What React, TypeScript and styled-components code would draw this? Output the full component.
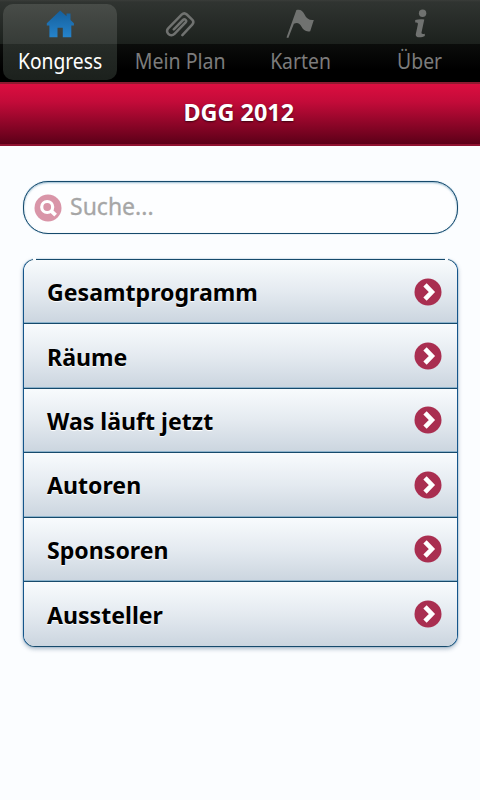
import type { ReactNode } from "react";
import styled, { createGlobalStyle } from "styled-components";

const tabs = [
  { id: "kongress", title: "Kongress", icon: <HomeIcon />, squeeze: 0.875 },
  { id: "plan", title: "Mein Plan", icon: <ClipIcon />, squeeze: 0.89 },
  { id: "karten", title: "Karten", icon: <FlagIcon />, squeeze: 0.88 },
  { id: "ueber", title: "Über", icon: <InfoIcon />, squeeze: 0.88 },
];

const entries = [
  "Gesamtprogramm",
  "Räume",
  "Was läuft jetzt",
  "Autoren",
  "Sponsoren",
  "Aussteller",
];

function HomeIcon() {
  return (
    <svg width="30" height="30" viewBox="0 0 30 30">
      <defs>
        <linearGradient id="home" x1="0" y1="0" x2="0" y2="1">
          <stop offset="0" stopColor="#155f9c" />
          <stop offset="1" stopColor="#2583cb" />
        </linearGradient>
      </defs>
      <path
        fill="url(#home)"
        d="M15.2 1.6 21.5 7.2V4.5h4V11l3.4 3.2v2.2h-2.6v11.8h-8.5V18.8h-5.3v9.4H4.4V16.4H1.8v-2.2z"
      />
    </svg>
  );
}

function ClipIcon() {
  return (
    <svg width="30" height="30" viewBox="0 0 30 30">
      <path
        fill="none"
        stroke="#707270"
        strokeWidth="2.5"
        strokeLinecap="round"
        strokeLinejoin="round"
        d="M17.4 26.2 27.2 15.6c1.6-1.8 1.4-3.4.2-4.7l-5.6-5.4c-1.7-1.6-3.6-1.4-5.2.2L3.4 19.2c-1.8 1.9-1.7 3.7-.2 5.5 1.8 2.1 4.3 2.2 6.3.2L20.6 13.3c1.6-1.8-.8-4.1-2.6-2.3L8.8 20.4"
      />
    </svg>
  );
}

function FlagIcon() {
  return (
    <svg width="30" height="30" viewBox="0 0 30 30">
      <path
        fill="#707270"
        d="M11.4.9c4.1-.9 6.2.6 8.2 4.7 1.8 4.1 4.7 5.9 9.2 5.4l-3.6 11.3c-4.5.8-7-1.2-8.8-4.7-1.7-3.5-4.1-4.5-7.5-2.9L3.3 28.9l-1.8-.5z"
      />
    </svg>
  );
}

function InfoIcon() {
  return (
    <svg width="30" height="30" viewBox="0 0 30 30">
      <circle cx="17.6" cy="4.2" r="3.7" fill="#707270" />
      <path
        fill="#707270"
        d="M10.2 11c3.1-1 6-1.1 9.1-.5l-2.8 13c-.2 1.5.9 1.7 3.3 1.2v2.4c-3 1.6-9.7 2.4-9-2.1l2-9.2c.4-2-.4-2.6-2.6-2.2z"
      />
    </svg>
  );
}

function ArrowIcon() {
  return (
    <svg width="28" height="28" viewBox="0 0 28 28">
      <circle cx="14" cy="14" r="13.5" fill="#a92e50" />
      <path
        fill="none"
        stroke="#fff"
        strokeWidth="4.6"
        d="m11 6.8 6.9 7.2-6.9 7.2"
      />
    </svg>
  );
}

function SearchIcon() {
  return (
    <svg width="28" height="28" viewBox="0 0 28 28">
      <circle cx="14" cy="14" r="13.5" fill="#d995a8" />
      <circle
        cx="13.2"
        cy="13"
        r="5.5"
        fill="none"
        stroke="#fff"
        strokeWidth="3.2"
      />
      <path stroke="#fff" strokeWidth="3.8" d="m16.6 16.4 5 4.8" />
    </svg>
  );
}

type TabProps = {
  active: boolean;
  icon: ReactNode;
  squeeze: number;
  title: string;
};

function Tab({ active, icon, squeeze, title }: TabProps) {
  return (
    <TabButton $active={active}>
      {icon}
      <TabLabel $squeeze={squeeze}>{title}</TabLabel>
    </TabButton>
  );
}

function App() {
  return (
    <>
      <GlobalStyle />
      <Screen>
        <TabBar>
          {tabs.map(({ id, ...tab }) => (
            <Tab key={id} active={id === "kongress"} {...tab} />
          ))}
        </TabBar>
        <Header>
          <Title>DGG 2012</Title>
        </Header>
        <Content>
          <SearchBox>
            <SearchIcon />
            <SearchHint>Suche...</SearchHint>
          </SearchBox>
          <List>
            {entries.map((entry) => (
              <ListItem key={entry}>
                <ListLabel>{entry}</ListLabel>
                <ArrowIcon />
              </ListItem>
            ))}
          </List>
        </Content>
      </Screen>
    </>
  );
}

const GlobalStyle = createGlobalStyle`
  * {
    box-sizing: border-box;
    margin: 0;
    padding: 0;
  }

  body {
    background-color: #fbfdff;
    font-family: "Noto Sans", "Open Sans", sans-serif;
  }

  svg {
    display: block;
    flex: none;
  }
`;

const Screen = styled.div`
  display: flex;
  flex-direction: column;
  height: 800px;
  overflow: hidden;
  width: 480px;
`;

const TabBar = styled.nav`
  background: linear-gradient(
    #3a3d3a 0,
    #303431 2px,
    #1c211d 44px,
    #0b0d0b 44px,
    #000 70px
  );
  display: grid;
  grid-template-columns: repeat(4, 120px);
  height: 82px;
  padding-top: 4px;
`;

const TabButton = styled.button<{ $active: boolean }>`
  align-items: center;
  background: ${(props) =>
    props.$active
      ? "linear-gradient(#484c48 0, #363b37 40px, #262b27 40px, #1c211d 100%)"
      : "none"};
  border: none;
  border-radius: 10px;
  color: ${(props) => (props.$active ? "#fff" : "#7c7c7c")};
  display: flex;
  flex-direction: column;
  font-family: inherit;
  height: 76px;
  margin: 0 3px;
  padding-top: 5px;
`;

const TabLabel = styled.span<{ $squeeze: number }>`
  font-size: 22px;
  line-height: 30px;
  margin-top: 6px;
  transform: scaleX(${(props) => props.$squeeze});
  white-space: nowrap;
`;

const Header = styled.header`
  align-items: center;
  background: linear-gradient(#dc0e40, #c30b39 30%, #5c0018);
  border-bottom: 2px solid #8f1230;
  border-top: 2px solid #8c1a30;
  display: flex;
  height: 64px;
  justify-content: center;
`;

const Title = styled.h1`
  color: #fff;
  font-size: 24px;
  font-weight: 700;
  line-height: 30px;
  padding: 0 2px 4px 0;
  text-shadow: 0 1px 2px rgba(0, 0, 0, 0.6);
  transform: scaleX(0.975);
`;

const Content = styled.main`
  padding: 35px 22px 0 23px;
`;

const SearchBox = styled.div`
  align-items: center;
  background-color: #fdfeff;
  border: 1px solid #164a6c;
  border-radius: 25px;
  box-shadow: inset 0 1px 2px rgba(50, 120, 160, 0.5),
    0 0 1px rgba(30, 110, 160, 0.7);
  display: flex;
  gap: 8px;
  height: 53px;
  padding-left: 10px;
`;

const SearchHint = styled.span`
  color: #a6a6a6;
  font-size: 23px;
  -webkit-text-stroke: 0.3px #a6a6a6;
  line-height: 30px;
  padding-bottom: 3px;
`;

const List = styled.ul`
  border: 1px solid #164a6c;
  border-left-color: #15558a;
  border-radius: 12px;
  border-right-color: #15558a;
  box-shadow: 0 0 1px #1871a8, 0 2px 4px rgba(60, 90, 120, 0.4);
  list-style: none;
  margin-top: 25px;
  position: relative;

  /* small breaks in the outline next to the upper corners */
  &::before,
  &::after {
    background-color: #fbfdff;
    content: "";
    height: 2px;
    position: absolute;
    top: -2px;
    width: 3px;
  }

  &::before {
    left: 9px;
  }

  &::after {
    right: 9px;
  }
`;

const ListItem = styled.li`
  align-items: center;
  background: linear-gradient(#f8fbfd, #e4eaf0 50%, #cbd5df);
  display: flex;
  height: 64.4px;
  justify-content: space-between;
  padding: 0 15.5px 0 23px;

  &:not(:last-child) {
    border-bottom: 1px solid #164a6c;
    box-shadow: inset 0 -1px 0 #8cb3cc;
  }

  &:first-child {
    border-radius: 11px 11px 0 0;
  }

  &:last-child {
    border-radius: 0 0 11px 11px;
  }
`;

const ListLabel = styled.span`
  color: #000;
  font-size: 24px;
  font-weight: 700;
  text-shadow: 0 1px 1px #fff;
  transform: scaleX(0.963);
  transform-origin: left;
`;

export default App;
